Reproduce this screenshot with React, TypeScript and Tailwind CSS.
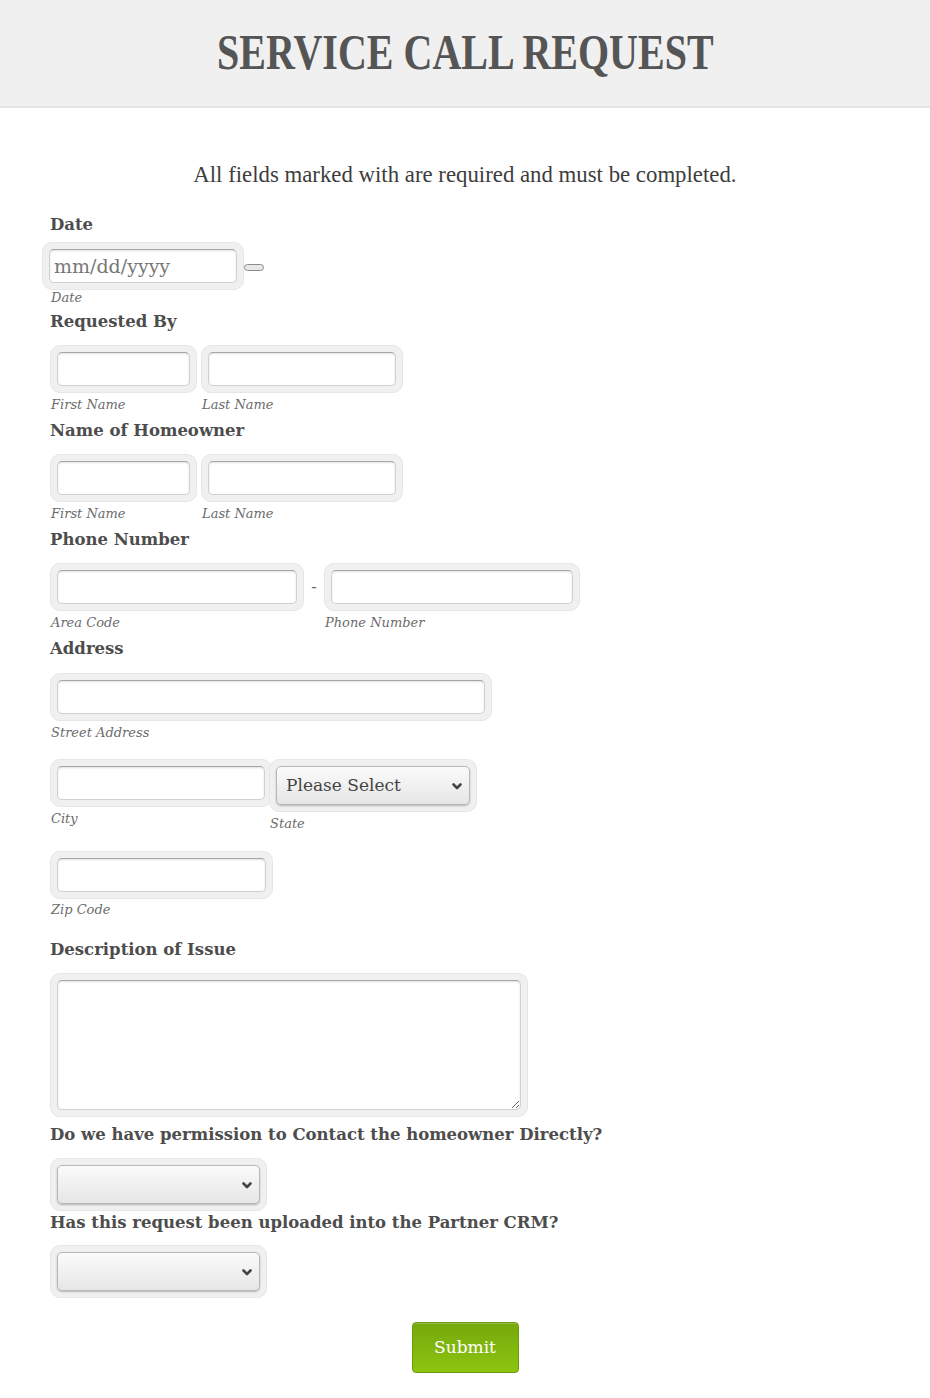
import type { ReactNode } from "react"

const SERIF = "font-['DejaVu_Serif',serif]"

function Frame({ className, children }: { className: string; children: ReactNode }) {
  return (
    <div className={`rounded-[10px] border border-[#e6e6e6] bg-[#f0f0f0] p-[6px] ${className}`}>
      {children}
    </div>
  )
}

function TextInput({ placeholder }: { placeholder?: string }) {
  return (
    <input
      type="text"
      placeholder={placeholder}
      className={`block h-[34px] w-full rounded-[5px] border border-[#d0d0d0] border-t-[#a6a6a6] bg-white px-[4px] text-[19px] text-[#555] shadow-[inset_0_1px_2px_rgba(0,0,0,0.12)] outline-none placeholder:text-[#777] ${SERIF}`}
    />
  )
}

function SelectBox({ label }: { label?: string }) {
  return (
    <div className="relative h-[39px] w-full">
      <select
        className={`block h-full w-full appearance-none rounded-[5px] border border-[#b8b8b8] bg-linear-to-b from-[#fbfbfb] to-[#e6e6e6] pl-[9px] text-[17px] text-[#444] shadow-[0_1px_2px_rgba(0,0,0,0.25)] outline-none ${SERIF}`}
      >
        <option>{label ?? ""}</option>
      </select>
      <svg
        className="pointer-events-none absolute right-[7px] top-1/2 h-[12px] w-[12px] -translate-y-1/2"
        viewBox="0 0 12 12"
        fill="none"
        stroke="#444"
        strokeWidth="2.6"
        strokeLinecap="round"
        strokeLinejoin="round"
      >
        <path d="M2.5 4.5 6 8l3.5-3.5" />
      </svg>
    </div>
  )
}

function Label({ children, className = "" }: { children: ReactNode; className?: string }) {
  return (
    <div className={`h-6 text-[16.5px] font-bold leading-6 text-[#4d4d4d] ${SERIF} ${className}`}>
      {children}
    </div>
  )
}

function Sub({ children, className = "" }: { children: ReactNode; className?: string }) {
  return (
    <div className={`h-4 pl-px text-[13px] italic leading-4 text-[#6b6b6b] ${SERIF} ${className}`}>
      {children}
    </div>
  )
}

export default function App() {
  return (
    <div className="min-h-[1398px] bg-white">
      {/* Header */}
      <header className="flex h-[108px] items-center justify-center border-b-2 border-[#e4e4e4] bg-[#f0f0f0]">
        <h1 className="inline-block scale-x-[0.8] pb-[2px] font-['Liberation_Serif',serif] text-[50px] font-bold leading-none text-[#555]">
          SERVICE CALL REQUEST
        </h1>
      </header>

      <main className="px-[50px]">
        <p className="mt-[55px] h-[22px] text-center font-['Liberation_Serif',serif] text-[24px] leading-[22px] text-[#3d3d3d]">
          <span className="inline-block scale-x-[0.95]">
            All fields marked with are required and must be completed.
          </span>
        </p>

        {/* Date */}
        <Label className="mt-[28px]">Date</Label>
        <div className="mt-[5px] -ml-2 flex items-center">
          <Frame className="w-[202px]">
            <TextInput placeholder="mm/dd/yyyy" />
          </Frame>
          <div className="mt-[2px] h-[7px] w-[20px] rounded-full border border-[#8a8a8a] bg-[#e8e8e8]" />
        </div>
        <Sub>Date</Sub>

        {/* Requested By */}
        <Label className="mt-[4px]">Requested By</Label>
        <div className="mt-[11px] flex gap-[4px]">
          <div className="flex flex-col">
            <Frame className="w-[147px]">
              <TextInput />
            </Frame>
            <Sub className="mt-[4px]">First Name</Sub>
          </div>
          <div className="flex flex-col">
            <Frame className="w-[202px]">
              <TextInput />
            </Frame>
            <Sub className="mt-[4px]">Last Name</Sub>
          </div>
        </div>

        {/* Name of Homeowner */}
        <Label className="mt-[6px]">Name of Homeowner</Label>
        <div className="mt-[11px] flex gap-[4px]">
          <div className="flex flex-col">
            <Frame className="w-[147px]">
              <TextInput />
            </Frame>
            <Sub className="mt-[4px]">First Name</Sub>
          </div>
          <div className="flex flex-col">
            <Frame className="w-[202px]">
              <TextInput />
            </Frame>
            <Sub className="mt-[4px]">Last Name</Sub>
          </div>
        </div>

        {/* Phone Number */}
        <Label className="mt-[6px]">Phone Number</Label>
        <div className="mt-[11px] flex">
          <div className="flex flex-col">
            <Frame className="w-[254px]">
              <TextInput />
            </Frame>
            <Sub className="mt-[4px]">Area Code</Sub>
          </div>
          <div className={`flex h-[48px] w-[20px] items-center justify-center text-[16px] text-[#666] ${SERIF}`}>
            -
          </div>
          <div className="flex flex-col">
            <Frame className="w-[256px]">
              <TextInput />
            </Frame>
            <Sub className="mt-[4px]">Phone Number</Sub>
          </div>
        </div>

        {/* Address */}
        <Label className="mt-[6px]">Address</Label>
        <Frame className="mt-[12px] w-[442px]">
          <TextInput />
        </Frame>
        <Sub className="mt-[4px]">Street Address</Sub>

        <div className="mt-[18px] flex items-start">
          <div className="flex flex-col">
            <Frame className="w-[222px]">
              <TextInput />
            </Frame>
            <Sub className="mt-[4px]">City</Sub>
          </div>
          <div className="-ml-[3px] flex flex-col">
            <Frame className="w-[208px]">
              <SelectBox label="Please Select" />
            </Frame>
            <Sub className="mt-[4px]">State</Sub>
          </div>
        </div>

        <Frame className="mt-[19px] w-[223px]">
          <TextInput />
        </Frame>
        <Sub className="mt-[3px]">Zip Code</Sub>

        {/* Description */}
        <Label className="mt-[20px]">Description of Issue</Label>
        <Frame className="mt-[11px] w-[478px]">
          <textarea
            className={`block h-[130px] w-full rounded-[5px] border border-[#d0d0d0] border-t-[#a6a6a6] bg-white shadow-[inset_0_1px_2px_rgba(0,0,0,0.12)] outline-none ${SERIF}`}
          />
        </Frame>

        {/* Questions */}
        <Label className="mt-[6px]">Do we have permission to Contact the homeowner Directly?</Label>
        <Frame className="mt-[11px] w-[217px]">
          <SelectBox />
        </Frame>

        <Label>Has this request been uploaded into the Partner CRM?</Label>
        <Frame className="mt-[10px] w-[217px]">
          <SelectBox />
        </Frame>

        <div className="mt-[24px] flex justify-center">
          <button
            type="button"
            className={`h-[51px] w-[107px] rounded-[4px] border border-[#6b9a0a] bg-linear-to-b from-[#76a80b] to-[#8dc511] text-[17px] text-white shadow-[inset_0_1px_0_rgba(255,255,255,0.25)] ${SERIF}`}
          >
            Submit
          </button>
        </div>
      </main>
    </div>
  )
}
